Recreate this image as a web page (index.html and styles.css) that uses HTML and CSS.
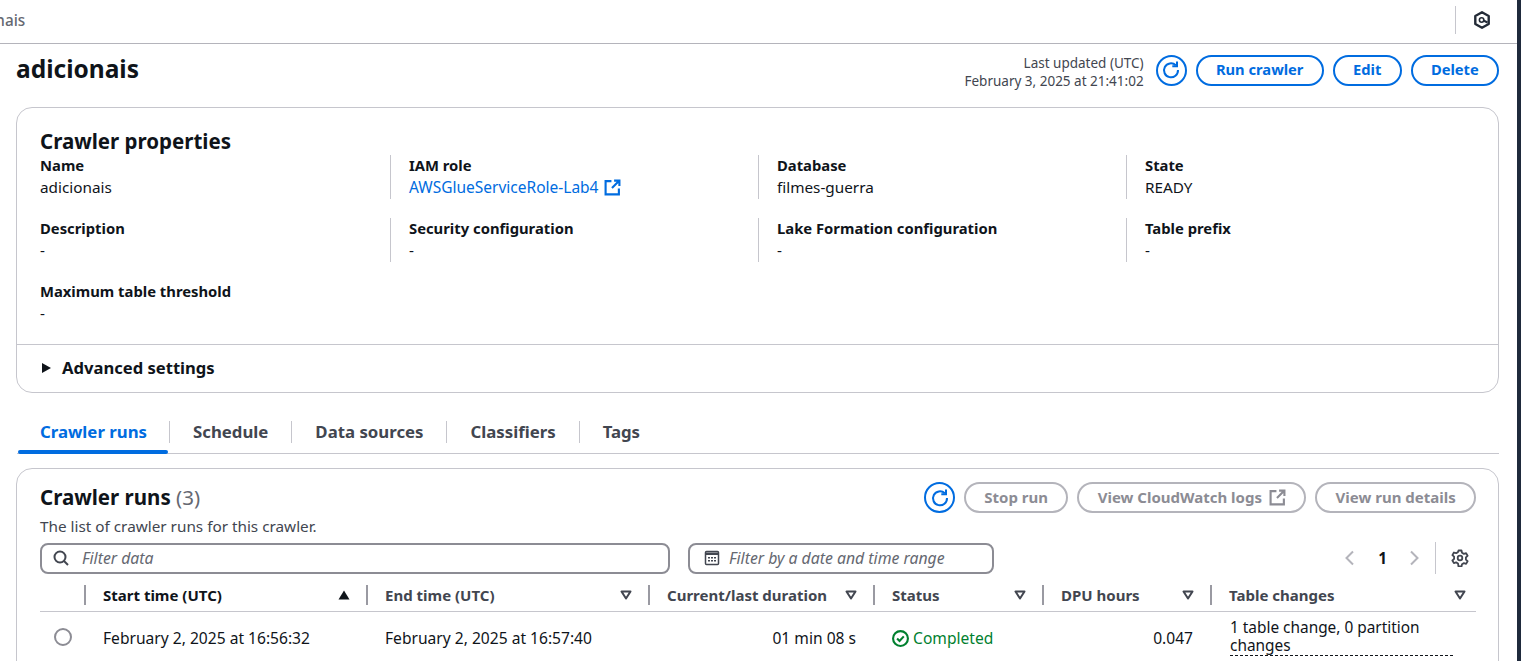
FILE: index.html
```html
<!DOCTYPE html>
<html lang="en">
<head>
  <meta charset="UTF-8">
  <title>adicionais</title>
  <link rel="stylesheet" href="styles.css">
</head>
<body>
  <div class="frame">
    <header class="topbar">
      <span class="crumb">adicionais</span>
      <div class="topbar-right">
        <svg width="16" height="18" viewBox="0 0 16 18"><path d="M8 1.300 14.700 5v8L8 16.700 1.300 13V5z" fill="none" stroke="#232b37" stroke-width="2.400" stroke-linejoin="round"/><circle cx="7.600" cy="9" r="2.200" fill="none" stroke="#232b37" stroke-width="1.600"/><path d="M9.500 9.500 13.500 11.500" stroke="#232b37" stroke-width="2"/></svg>
      </div>
    </header>

    <div class="page-head">
      <h1>adicionais</h1>
      <div class="page-actions">
        <div class="updated">
          <div>Last updated (UTC)</div>
          <div>February 3, 2025 at 21:41:02</div>
        </div>
        <button class="refresh">
          <svg width="20" height="20" viewBox="0 0 20 20"><path d="M14.800 5.200A7 7 0 1 0 17 10" fill="none" stroke="#006ce0" stroke-width="2"/><path d="M16 1.500v4.700h-4.700" fill="none" stroke="#006ce0" stroke-width="2"/></svg>
        </button>
        <button class="btn">Run crawler</button>
        <button class="btn">Edit</button>
        <button class="btn">Delete</button>
      </div>
    </div>

    <section class="card props">
      <h2>Crawler properties</h2>
      <div class="prop-grid">
        <div class="prop"><div class="prop-label">Name</div><div>adicionais</div></div>
        <div class="prop"><div class="prop-label">IAM role</div><div><a class="link">AWSGlueServiceRole-Lab4 <svg width="17" height="17" viewBox="0 0 16 16"><path d="M7 2H1.500v12.500H14V9M9.500 1.500h5v5M14.500 1.500 7.500 8.500" fill="none" stroke="#006ce0" stroke-width="2"/></svg></a></div></div>
        <div class="prop"><div class="prop-label">Database</div><div>filmes-guerra</div></div>
        <div class="prop"><div class="prop-label">State</div><div>READY</div></div>
        <div class="prop"><div class="prop-label">Description</div><div>-</div></div>
        <div class="prop"><div class="prop-label">Security configuration</div><div>-</div></div>
        <div class="prop"><div class="prop-label">Lake Formation configuration</div><div>-</div></div>
        <div class="prop"><div class="prop-label">Table prefix</div><div>-</div></div>
        <div class="prop"><div class="prop-label">Maximum table threshold</div><div>-</div></div>
      </div>
      <div class="advanced"><span class="caret"></span>Advanced settings</div>
    </section>

    <nav class="tabs">
      <a class="tab tab-active">Crawler runs</a>
      <a class="tab">Schedule</a>
      <a class="tab">Data sources</a>
      <a class="tab">Classifiers</a>
      <a class="tab">Tags</a>
    </nav>

    <section class="card runs">
      <div class="runs-head">
        <div>
          <h2>Crawler runs <span class="count">(3)</span></h2>
          <p class="runs-desc">The list of crawler runs for this crawler.</p>
        </div>
        <div class="runs-actions">
          <button class="refresh">
            <svg width="20" height="20" viewBox="0 0 20 20"><path d="M14.800 5.200A7 7 0 1 0 17 10" fill="none" stroke="#006ce0" stroke-width="2"/><path d="M16 1.500v4.700h-4.700" fill="none" stroke="#006ce0" stroke-width="2"/></svg>
          </button>
          <button class="btn btn-off">Stop run</button>
          <button class="btn btn-off btn-icon">View CloudWatch logs <svg width="17" height="17" viewBox="0 0 16 16"><path d="M7 2H1.500v12.500H14V9M9.500 1.500h5v5M14.500 1.500 7.500 8.500" fill="none" stroke="#8c8c94" stroke-width="2"/></svg></button>
          <button class="btn btn-off">View run details</button>
        </div>
      </div>

      <div class="filters">
        <div class="input input-text">
          <svg width="16" height="16" viewBox="0 0 16 16"><circle cx="7" cy="7" r="5.500" fill="none" stroke="#424650" stroke-width="2"/><path d="M11 11l4 4" stroke="#424650" stroke-width="2"/></svg>
          <span>Filter data</span>
        </div>
        <div class="input input-date">
          <svg width="16" height="16" viewBox="0 0 16 16"><rect x="1.500" y="1.500" width="13" height="13" rx="1" fill="none" stroke="#424650" stroke-width="1.500"/><path d="M2 2.500h12v2.500H2z" fill="#424650"/><path d="M4 7h2v1.500H4zM7 7h2v1.500H7zM10 7h2v1.500h-2zM4 10h2v1.500H4zM7 10h2v1.500H7zM10 10h2v1.500h-2z" fill="#424650"/></svg>
          <span>Filter by a date and time range</span>
        </div>
        <div class="pager">
          <svg width="16" height="16" viewBox="0 0 16 16"><path d="M11 1.500 4.500 8l6.500 6.500" fill="none" stroke="#b4b4bb" stroke-width="2"/></svg>
          <span class="page-num">1</span>
          <svg width="16" height="16" viewBox="0 0 16 16"><path d="M5 1.500 11.500 8 5 14.500" fill="none" stroke="#b4b4bb" stroke-width="2"/></svg>
          <span class="pager-sep"></span>
          <svg width="18" height="18" viewBox="0 0 18 18"><path d="M7.500 1.500h3l.5 2.300 1.900 1.100 2.200-.7 1.500 2.600-1.700 1.600v2.200l1.700 1.600-1.500 2.600-2.200-.7-1.900 1.100-.5 2.300h-3L7 14.500l-1.900-1.100-2.200.7-1.500-2.600 1.700-1.600V7.700L1.400 6.100l1.500-2.600 2.200.7L7 3.100z" fill="none" stroke="#424650" stroke-width="1.800" stroke-linejoin="round"/><circle cx="9" cy="9" r="2.300" fill="none" stroke="#424650" stroke-width="1.800"/></svg>
        </div>
      </div>

      <table class="runs-table">
        <thead>
          <tr>
            <th class="col-radio"><div class="th"></div></th>
            <th class="col-start"><div class="th th-active"><span>Start time (UTC)</span><svg class="sort" width="12" height="10" viewBox="0 0 12 10"><path d="M6 .5 11.500 9.500H.500z" fill="#0f141a"/></svg></div></th>
            <th class="col-end"><div class="th"><span>End time (UTC)</span><svg class="sort" width="12" height="10" viewBox="0 0 12 10"><path d="M1.500 1.500h9L6 8.500z" fill="none" stroke="#424650" stroke-width="2" stroke-linejoin="round"/></svg></div></th>
            <th class="col-dur"><div class="th"><span>Current/last duration</span><svg class="sort" width="12" height="10" viewBox="0 0 12 10"><path d="M1.500 1.500h9L6 8.500z" fill="none" stroke="#424650" stroke-width="2" stroke-linejoin="round"/></svg></div></th>
            <th class="col-status"><div class="th"><span>Status</span><svg class="sort" width="12" height="10" viewBox="0 0 12 10"><path d="M1.500 1.500h9L6 8.500z" fill="none" stroke="#424650" stroke-width="2" stroke-linejoin="round"/></svg></div></th>
            <th class="col-dpu"><div class="th"><span>DPU hours</span><svg class="sort" width="12" height="10" viewBox="0 0 12 10"><path d="M1.500 1.500h9L6 8.500z" fill="none" stroke="#424650" stroke-width="2" stroke-linejoin="round"/></svg></div></th>
            <th class="col-changes"><div class="th th-last"><span>Table changes</span><svg class="sort" width="12" height="10" viewBox="0 0 12 10"><path d="M1.500 1.500h9L6 8.500z" fill="none" stroke="#424650" stroke-width="2" stroke-linejoin="round"/></svg></div></th>
          </tr>
        </thead>
        <tbody>
          <tr>
            <td class="cell-radio"><span class="radio"></span></td>
            <td>February 2, 2025 at 16:56:32</td>
            <td>February 2, 2025 at 16:57:40</td>
            <td class="num">01 min 08 s</td>
            <td class="status"><svg width="17" height="17" viewBox="0 0 16 16"><circle cx="8" cy="8" r="7" fill="none" stroke="#00802f" stroke-width="2"/><path d="m4.800 8 2.300 2.300 4-4.300" fill="none" stroke="#00802f" stroke-width="2"/></svg> Completed</td>
            <td class="num">0.047</td>
            <td class="cell-changes"><span class="dotted">1 table change, 0 partition changes</span></td>
          </tr>
        </tbody>
      </table>
    </section>
  </div>
</body>
</html>
```

FILE: styles.css
```css
html, body {
  margin: 0;
  height: 661px;
  overflow: hidden;
  background: #fff;
}
body {
  font-family: "Noto Sans", sans-serif;
  font-size: 15.300px;
  line-height: 20px;
  color: #0f141a;
}
h1, h2, p {
  margin: 0;
}
button {
  font-family: inherit;
}
.frame {
  width: 1517px;
  height: 661px;
  overflow: hidden;
  border-right: 4px solid #1f2a3c;
}
.topbar {
  height: 43px;
  border-bottom: 1px solid #b4b4bb;
  display: flex;
  align-items: center;
  justify-content: space-between;
}
.crumb {
  margin-left: -48px;
  color: #656871;
  font-weight: 500;
  margin-top: -3px;
}
.topbar-right {
  display: flex;
  align-items: center;
  height: 28px;
  border-left: 1px solid #c6c6cd;
  padding: 0 27px 0 18px;
  margin-top: -4px;
}
.page-head {
  display: flex;
  justify-content: space-between;
  align-items: center;
  padding: 0 18px 0 16px;
  height: 52px;
}
h1 {
  font-size: 24.500px;
  line-height: 30px;
  font-weight: 700;
  margin-top: -2px;
}
.page-actions {
  display: flex;
  align-items: center;
  gap: 9px;
}
.updated {
  text-align: right;
  font-size: 13.500px;
  line-height: 18px;
  color: #424650;
  margin: 4px 3px 0 0;
}
.refresh {
  width: 31px;
  height: 31px;
  border: 2px solid #006ce0;
  border-radius: 50%;
  background: #fff;
  padding: 0;
  display: flex;
  align-items: center;
  justify-content: center;
}
.btn {
  height: 31px;
  padding: 0 18.300px 2px;
  border: 2px solid #006ce0;
  border-radius: 20px;
  background: #fff;
  color: #006ce0;
  font-size: 14.700px;
  font-weight: 700;
  display: flex;
  align-items: center;
}
.btn-off {
  border-color: #b4b4bb;
  color: #8c8c94;
  font-size: 15px;
}
.btn-icon {
  gap: 7px;
}
.btn-icon svg {
  margin-top: 2px;
}
.card {
  margin: 0 18px 0 16px;
  border: 1px solid #c6c6cd;
  border-radius: 16px;
  box-sizing: border-box;
}
.props {
  margin-top: 11px;
  height: 286px;
  padding-top: 20px;
}
.card h2 {
  font-size: 20.500px;
  line-height: 26px;
  font-weight: 700;
}
.props h2 {
  padding-left: 23px;
}
.prop-grid {
  display: grid;
  grid-template-columns: 350px repeat(3, 368px);
  grid-auto-rows: 63px;
  padding-left: 23px;
  height: 189px;
  margin-top: 1px;
}
.prop {
  padding-left: 18px;
  border-left: 1px solid #c6c6cd;
  height: 44px;
}
.prop:nth-child(4n + 1) {
  padding-left: 0;
  border-left: 0;
}
.prop-label {
  font-size: 14.800px;
  font-weight: 700;
  line-height: 20px;
  margin-bottom: 2px;
}
.link {
  color: #006ce0;
  display: inline-flex;
  align-items: center;
  gap: 5px;
  font-size: 15.500px;
}
.advanced {
  border-top: 1px solid #c6c6cd;
  padding: 12px 0 0 23px;
  font-size: 16.600px;
  line-height: 22px;
  font-weight: 700;
  display: flex;
  align-items: center;
}
.caret {
  width: 0;
  height: 0;
  border-left: 9px solid #0f141a;
  border-top: 5.500px solid transparent;
  border-bottom: 5.500px solid transparent;
  margin: 0 11px 0 2px;
}
.tabs {
  display: flex;
  align-items: center;
  height: 61px;
  margin: 0 18px 0 17px;
  border-bottom: 1px solid #c6c6cd;
  box-sizing: border-box;
  padding-top: 17px;
}
.tab {
  font-size: 16.800px;
  font-weight: 700;
  color: #424650;
  padding: 0 23px;
  height: 22px;
  line-height: 22px;
  border-left: 1px solid #c6c6cd;
  position: relative;
}
.tab-active {
  color: #006ce0;
  border-left: 0;
  padding-right: 22px;
}
.tab-active::after {
  content: "";
  position: absolute;
  left: 1px;
  right: 1px;
  bottom: -11px;
  height: 4px;
  border-radius: 2px;
  background: #006ce0;
}
.runs {
  margin-top: 14px;
  height: 300px;
  padding: 15px 22px 0 23px;
}
.runs-head {
  display: flex;
  justify-content: space-between;
  align-items: flex-start;
}
.count {
  font-weight: 400;
  color: #656871;
}
.runs-desc {
  line-height: 20px;
  color: #424650;
  margin-top: 6px;
}
.runs-actions {
  display: flex;
  align-items: center;
  gap: 9px;
  margin-top: -2px;
}
.filters {
  display: flex;
  align-items: center;
  margin-top: 6px;
  height: 32px;
}
.input {
  height: 31px;
  box-sizing: border-box;
  border: 2px solid #8c8c94;
  border-radius: 8px;
  display: flex;
  align-items: center;
  gap: 9px;
  font-style: italic;
  font-size: 15.800px;
  color: #656871;
  padding-left: 11px;
}
.input-text {
  width: 630px;
  gap: 13px;
}
.input-date {
  width: 306px;
  margin-left: 18px;
  padding-left: 14px;
}
.pager {
  margin-left: auto;
  display: flex;
  align-items: center;
  padding-right: 7px;
}
.page-num {
  font-weight: 700;
  width: 15px;
  margin: 0 16px 0 17px;
  text-align: center;
}
.pager-sep {
  width: 1px;
  height: 32px;
  background: #c6c6cd;
  margin: 0 15px 0 13px;
}
.runs-table {
  width: 100%;
  border-collapse: collapse;
  table-layout: fixed;
  margin-top: 4px;
}
.runs-table th {
  padding: 0;
  text-align: left;
  font-size: 15px;
  font-weight: 700;
  color: #424650;
  height: 33px;
  border-bottom: 1px solid #c6c6cd;
}
.th {
  display: flex;
  justify-content: space-between;
  align-items: center;
  height: 20px;
  padding: 0 16px 0 17px;
  border-left: 2px solid #9a9aa2;
}
.col-radio .th {
  border-left: 0;
}
.th-active {
  color: #0f141a;
}
.th-last {
  padding-right: 10px;
}
.col-radio { width: 44px; }
.col-start { width: 282px; }
.col-end { width: 282px; }
.col-dur { width: 225px; }
.col-status { width: 169px; }
.col-dpu { width: 168px; }
.runs-table td {
  padding: 7px 17px 5px 19px;
  vertical-align: middle;
  font-size: 15.600px;
  line-height: 18px;
}
.runs-table td.cell-radio {
  padding: 0 0 0 14px;
}
.runs-table td.cell-changes {
  padding: 7px 23px 5px 20px;
  font-size: 15.400px;
}
.radio {
  display: block;
  width: 14px;
  height: 14px;
  border: 2px solid #8c8c94;
  border-radius: 50%;
}
.num {
  text-align: right;
}
.status {
  color: #00802f;
}
.status svg {
  vertical-align: -3px;
}
.dotted {
  display: block;
  border-bottom: 1px dashed #0f141a;
}
```
